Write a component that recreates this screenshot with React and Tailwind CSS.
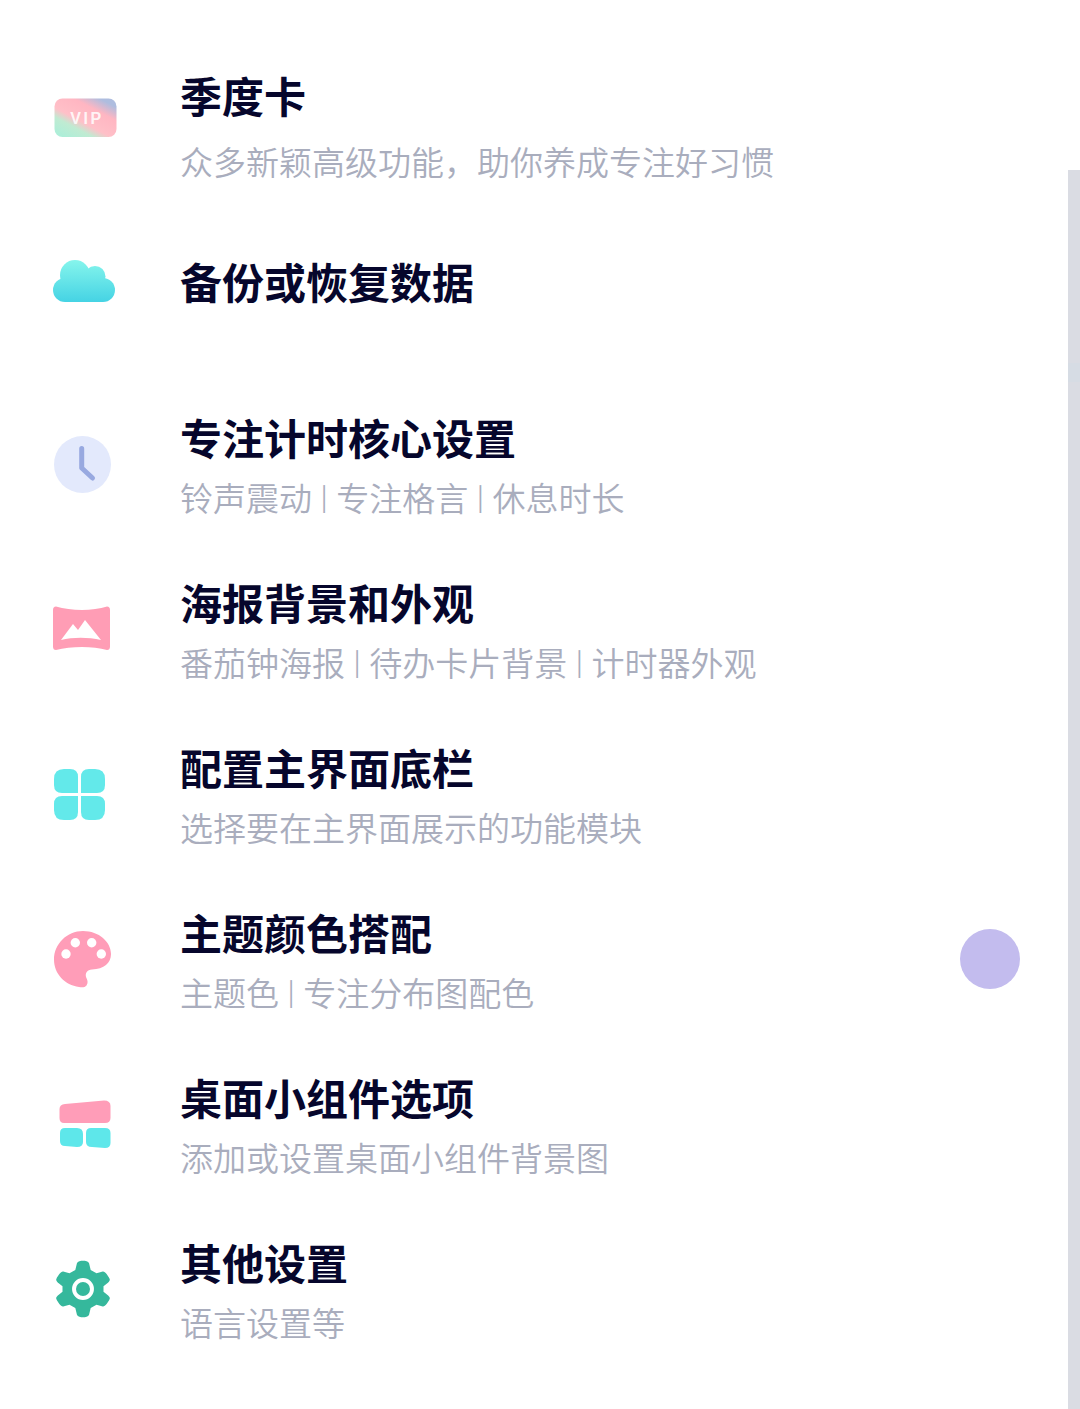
const FONT = "font-['Noto_Sans_CJK_SC','Noto_Sans',sans-serif]";

function Vip() {
  return (
    <svg width="64" height="40" viewBox="0 0 64 40">
      <defs>
        <linearGradient id="vipg" x1="0.12" y1="0.95" x2="0.88" y2="0.05">
          <stop offset="0" stopColor="#aeeed8" />
          <stop offset="0.24" stopColor="#c0ebd2" />
          <stop offset="0.4" stopColor="#ffc0c8" />
          <stop offset="0.72" stopColor="#ffb6c2" />
          <stop offset="0.95" stopColor="#aebddf" />
        </linearGradient>
      </defs>
      <rect x="0.5" y="0.5" width="62" height="38.500" rx="8" fill="url(#vipg)" />
      <text x="33" y="26" textAnchor="middle" fontFamily="Liberation Sans" fontWeight="700" fontSize="16" letterSpacing="2.500" fill="#fff" fillOpacity="0.85">VIP</text>
    </svg>
  );
}
function Cloud() {
  return (
    <svg width="64" height="44" viewBox="0 0 64 44">
      <defs>
        <linearGradient id="cg" gradientUnits="userSpaceOnUse" x1="0" y1="0" x2="0" y2="42">
          <stop offset="0" stopColor="#86f5ec" />
          <stop offset="1" stopColor="#45d3e4" />
        </linearGradient>
      </defs>
      <g fill="url(#cg)">
        <circle cx="22" cy="15" r="15" />
        <circle cx="42" cy="16.500" r="10.500" />
        <rect x="0" y="18" width="62" height="24" rx="12" />
      </g>
    </svg>
  );
}
function Clock() {
  return (
    <svg width="58" height="58" viewBox="0 0 58 58">
      <circle cx="28.500" cy="28.500" r="28.500" fill="#e3e9fc" />
      <path d="M27.700 12.500 V32 L38.500 42" fill="none" stroke="#98a9e0" strokeWidth="5" strokeLinecap="round" strokeLinejoin="round" />
    </svg>
  );
}
function Poster() {
  return (
    <svg width="58" height="46" viewBox="0 0 58 46">
      <path d="M3 0.500 C18 5 40 5 54 0.500 Q57 0.500 57 4 V40.500 Q57 44 54 44 C40 40 18 40 3 44 Q0 44 0 40.500 V4 Q0 0.500 3 0.500 Z" fill="#ff9db5" />
      <path d="M8 34 L20 18 L25 24 L32 14 L48 34 C35 31 20 31 8 34 Z" fill="#fff" />
    </svg>
  );
}
function Grid4() {
  return (
    <svg width="52" height="52" viewBox="0 0 52 52" fill="#63e9ea">
      <path d="M10 0 H16 Q24 0 24 8 V24 H8 Q0 24 0 16 V10 Q0 0 10 0 Z" />
      <path d="M41 0 H35 Q27 0 27 8 V24 H43 Q51 24 51 16 V10 Q51 0 41 0 Z" />
      <path d="M10 51 H16 Q24 51 24 43 V27 H8 Q0 27 0 35 V41 Q0 51 10 51 Z" />
      <path d="M41 51 H35 Q27 51 27 43 V27 H43 Q51 27 51 35 V41 Q51 51 41 51 Z" />
    </svg>
  );
}
function Palette() {
  return (
    <svg width="58" height="58" viewBox="0 0 58 58">
      <path d="M29 0 C45 0 57 11 57 23 C57 32 50 38 38 38.500 C33 39 31 42 32 46 C34 50 34 52 32.500 54.500 C31 56.500 28 56.500 25 56 C11 54 0 43 0 28.500 C0 13 13 0 29 0 Z" fill="#ff9db8" />
      <circle cx="21.300" cy="11.700" r="4.700" fill="#fff" />
      <circle cx="37.700" cy="11.700" r="4.700" fill="#fff" />
      <circle cx="12" cy="23" r="4.700" fill="#fff" />
      <circle cx="47.300" cy="23" r="4.700" fill="#fff" />
    </svg>
  );
}
function Widget() {
  return (
    <svg width="52" height="48" viewBox="0 0 52 48">
      <path d="M6 4 L45 0.500 Q51.500 0.500 51.500 6 V18 Q51.500 23 46 23 H5 Q0.500 23 0.500 18 V9 Q0.500 4.500 6 4 Z" fill="#ff9db8" />
      <path d="M6 28 H18 Q24 28 24 34 V42 Q24 47 18 47 L6 46 Q1 46 1 41 V33 Q1 28 6 28 Z" fill="#5ee7ea" />
      <path d="M32 28 H46 Q51.500 28 51.500 33 V43 Q51.500 48 46 48 L33 47 Q27 47 27 42 V33 Q27 28 32 28 Z" fill="#5ee7ea" />
    </svg>
  );
}
function Gear() {
  return (
    <svg width="56" height="58" viewBox="0 0 24 24.900">
      <path fill="#35b89c" fillRule="evenodd" d="M12 0.300 C13 0.300 14.300 0.500 14.600 1.400 L15.300 4.300 L17.800 5.700 L20.500 4.900 C21.400 4.700 22.800 6.700 23.400 8 C23.800 8.800 23 9.500 22.300 10.100 L20.800 11.300 V13.600 L22.400 14.900 C23.100 15.500 23.800 16.100 23.400 16.900 C22.800 18.200 21.400 20.200 20.500 20 L17.800 19.200 L15.300 20.600 L14.600 23.500 C14.300 24.400 13 24.600 12 24.600 C11 24.600 9.700 24.400 9.400 23.500 L8.700 20.600 L6.200 19.200 L3.500 20 C2.600 20.200 1.200 18.200 0.600 16.900 C0.200 16.100 0.900 15.500 1.600 14.900 L3.200 13.600 V11.300 L1.700 10.100 C1 9.500 0.200 8.800 0.600 8 C1.200 6.700 2.600 4.700 3.500 4.900 L6.200 5.700 L8.700 4.300 L9.400 1.400 C9.700 0.500 11 0.300 12 0.300 Z M12 7.750 A4.700 4.700 0 1 0 12 17.150 A4.700 4.700 0 1 0 12 7.750 Z" />
      <circle cx="12" cy="12.450" r="3" fill="#35b89c" />
    </svg>
  );
}

const rows = [
  { icon: <Vip />, ml: "ml-[54px]", title: "季度卡", sub: ["众多新颖高级功能，助你养成专注好习惯"], h: "h-[186px]", iconTop: "mt-[29px]", subGap: "mt-[14px]" },
  { icon: <Cloud />, ml: "ml-[53px]", title: "备份或恢复数据", h: "h-[156px]", iconTop: "mt-[5px]" },
  { icon: <Clock />, ml: "ml-[54px]", title: "专注计时核心设置", sub: ["铃声震动", "专注格言", "休息时长"], iconTop: "mt-[25px]" },
  { icon: <Poster />, ml: "ml-[53px]", title: "海报背景和外观", sub: ["番茄钟海报", "待办卡片背景", "计时器外观"], iconTop: "mt-[30px]" },
  { icon: <Grid4 />, ml: "ml-[54px]", title: "配置主界面底栏", sub: ["选择要在主界面展示的功能模块"], iconTop: "mt-[28px]" },
  { icon: <Palette />, ml: "ml-[54px]", title: "主题颜色搭配", sub: ["主题色", "专注分布图配色"], iconTop: "mt-[25px]" },
  { icon: <Widget />, ml: "ml-[59px]", title: "桌面小组件选项", sub: ["添加或设置桌面小组件背景图"], iconTop: "mt-[29px]" },
  { icon: <Gear />, ml: "ml-[55px]", title: "其他设置", sub: ["语言设置等"], iconTop: "mt-[24px]" },
];

function Sub({ parts, gap }) {
  return (
    <div className={`${gap} text-[33px] leading-[52px] font-[350] text-[#a9adbd]`}>
      {parts.map((p, i) => (
        <span key={p}>
          {i > 0 && (
            <>
              {" "}
              <span className="text-[25px] font-normal leading-none align-[5px] mx-[1.400px]">|</span>{" "}
            </>
          )}
          {p}
        </span>
      ))}
    </div>
  );
}

export default function App() {
  return (
    <div className={`relative w-[1080px] h-[1409px] overflow-hidden bg-white ${FONT}`}>
      <div className="pt-[69px]">
        {rows.map((r) => (
          <div key={r.title} className={`flex ${r.h || "h-[165px]"}`}>
            <div className="w-[180px] shrink-0">
              <div className={`${r.ml} ${r.iconTop}`}>{r.icon}</div>
            </div>
            <div>
              <div className="text-[42px] leading-[52px] font-bold text-[#06062c]">{r.title}</div>
              {r.sub && <Sub parts={r.sub} gap={r.subGap || "mt-[8px]"} />}
            </div>
          </div>
        ))}
      </div>
      <div className="absolute right-0 top-[170px] bottom-0 w-3 bg-[#dadce3]">
        <div className="mt-[193px] h-[19px] bg-[#d6dce4]" />
      </div>
      <div className="absolute left-[960px] top-[929px] w-[60px] h-[60px] rounded-full bg-[#c3bcee]" />
    </div>
  );
}
